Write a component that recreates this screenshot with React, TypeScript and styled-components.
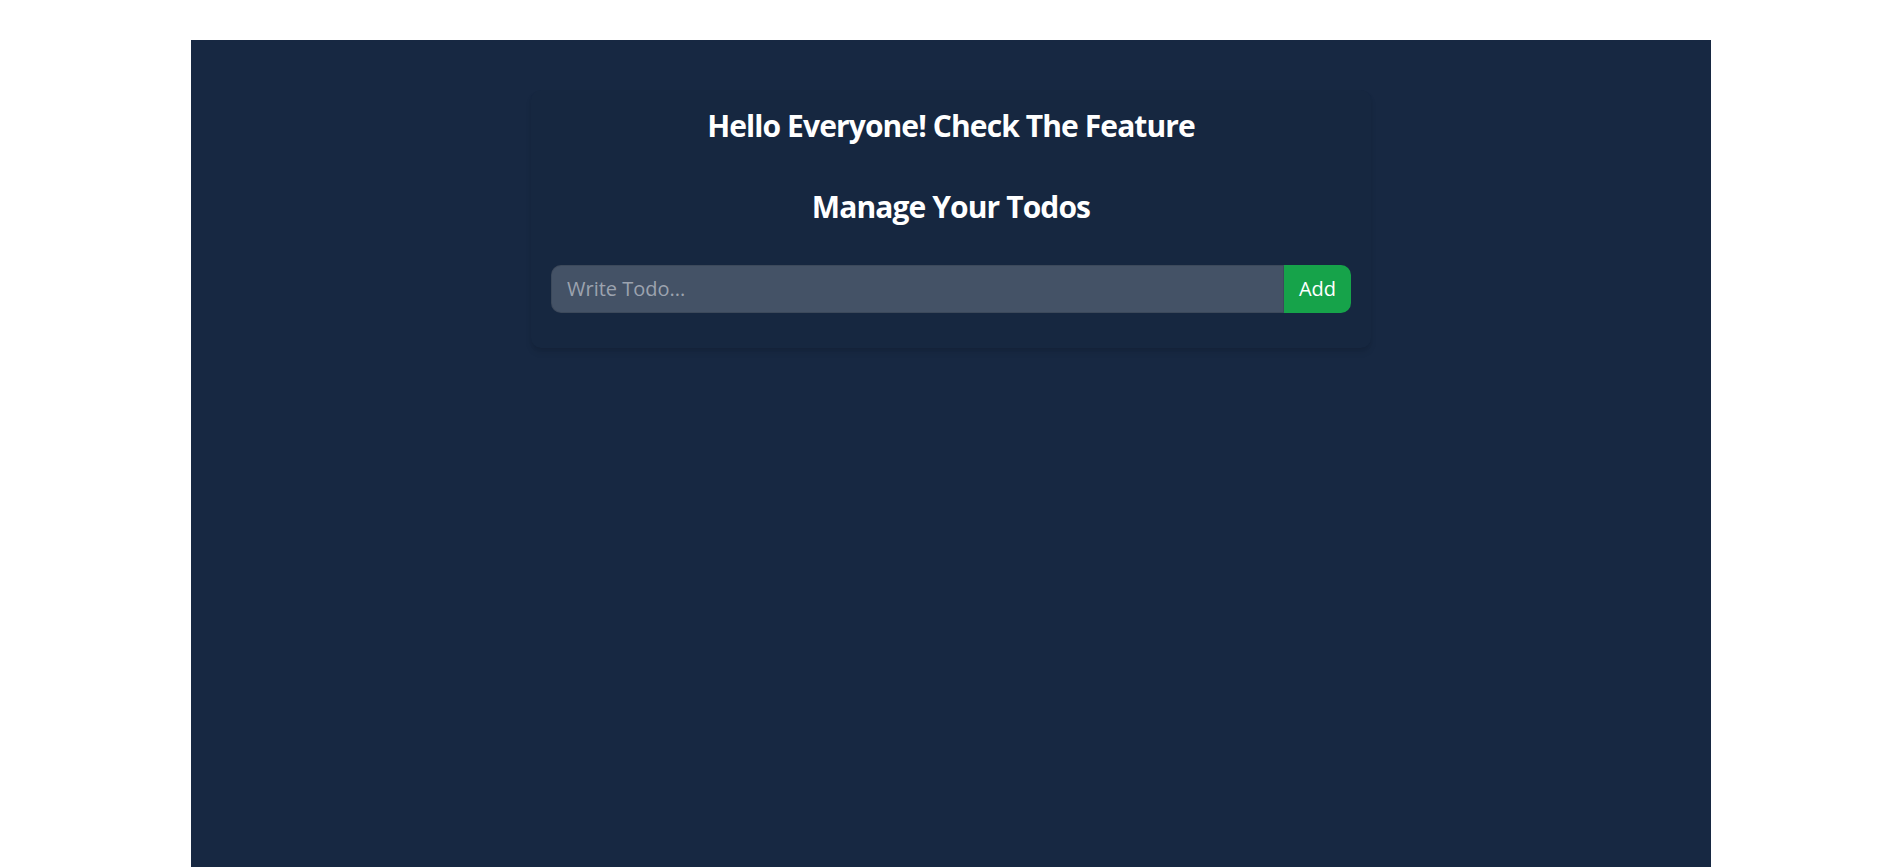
import styled, { createGlobalStyle } from "styled-components"

const GlobalStyle = createGlobalStyle`
  html, body {
    margin: 0;
    padding: 0;
    background: #ffffff;
  }
  body {
    font-family: "Open Sans", "Noto Sans", "Liberation Sans", sans-serif;
  }
  * {
    box-sizing: border-box;
  }
`

const Page = styled.main`
  padding: 40px 0 0 191px;
`

const Panel = styled.section`
  width: 1520px;
  min-height: 100vh;
  background: #172842;
  padding: 50px 0;
`

const Card = styled.div`
  width: 840px;
  margin: 0 auto;
  padding: 16px 20px 35px;
  border-radius: 10px;
  background: #162740;
  box-shadow: 0 5px 7.5px -1.25px rgba(0, 0, 0, 0.1),
    0 2.5px 5px -2.5px rgba(0, 0, 0, 0.1);
  color: #ffffff;
`

const Heading = styled.h1<{ gap: number }>`
  margin: 0 0 ${(props) => props.gap}px;
  font-size: 30px;
  line-height: 40px;
  font-weight: 700;
  text-align: center;
  letter-spacing: -0.9px;
`

const TodoForm = styled.form`
  display: flex;
`

const TodoInput = styled.input`
  flex: 1;
  height: 47.5px;
  padding: 0 15px;
  border: 1.25px solid rgba(0, 0, 0, 0.1);
  border-radius: 10px 0 0 10px;
  background: rgba(255, 255, 255, 0.2);
  color: #ffffff;
  font-family: inherit;
  font-size: 20px;
  outline: none;

  &::placeholder {
    color: #9ca3af;
  }
`

const AddButton = styled.button`
  flex-shrink: 0;
  padding: 0 15px;
  border: none;
  border-radius: 0 10px 10px 0;
  background: #16a34a;
  color: #ffffff;
  font-family: inherit;
  font-size: 20px;
  cursor: pointer;
`

function App() {
  return (
    <>
      <GlobalStyle />
      <Page>
        <Panel>
          <Card>
            <Heading gap={41}>Hello Everyone! Check The Feature</Heading>
            <Heading gap={38}>Manage Your Todos</Heading>
            <TodoForm onSubmit={(e) => e.preventDefault()}>
              <TodoInput type="text" placeholder="Write Todo..." />
              <AddButton type="submit">Add</AddButton>
            </TodoForm>
          </Card>
        </Panel>
      </Page>
    </>
  )
}

export default App
